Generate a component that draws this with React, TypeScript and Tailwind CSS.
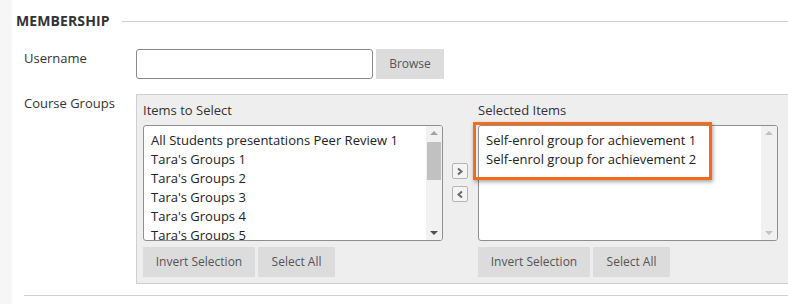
import React from "react";

const available = [
  "All Students presentations Peer Review 1",
  "Tara's Groups 1",
  "Tara's Groups 2",
  "Tara's Groups 3",
  "Tara's Groups 4",
  "Tara's Groups 5",
];

const selected = ["Self-enrol group for achievement 1", "Self-enrol group for achievement 2"];

function Scrollbar({ thumb }: { thumb?: boolean }) {
  return (
    <div className="flex w-[16px] flex-col items-center bg-[#f1f1f1] py-[5px]">
      <span className={`h-0 w-0 border-x-[4px] border-b-[4px] border-x-transparent ${thumb ? "border-b-[#a3a3a3]" : "border-b-[#c2c2c2]"}`} />
      {thumb ? <div className="mt-[7px] h-[38px] w-[14px] bg-[#c1c1c1]" /> : null}
      <div className="flex-1" />
      <span className={`h-0 w-0 border-x-[4px] border-t-[4px] border-x-transparent ${thumb ? "border-t-[#505050]" : "border-t-[#c2c2c2]"}`} />
    </div>
  );
}

function ListBox({ items, thumb }: { items: string[]; thumb?: boolean }) {
  return (
    <div className="flex h-[116px] w-[300px] overflow-hidden rounded-[3px] border border-[#8f8f8f] bg-white">
      <ul className="flex-1 overflow-hidden px-[7px] pt-[5px] text-[13px] leading-[19px] text-[#222]">
        {items.map((item) => (
          <li key={item} className="whitespace-nowrap">
            {item}
          </li>
        ))}
      </ul>
      <Scrollbar thumb={thumb} />
    </div>
  );
}

function GrayButton({ label, width }: { label: string; width: string }) {
  return (
    <button className={`h-[30px] ${width} bg-[#dcdcdc] text-[12px] text-[#555]`} type="button">
      {label}
    </button>
  );
}

function Column({ title, items, thumb }: { title: string; items: string[]; thumb?: boolean }) {
  return (
    <div className="flex flex-col">
      <p className="h-[30px] pt-[6px] text-[13px] leading-[18px] text-[#333]">{title}</p>
      <ListBox items={items} thumb={thumb} />
      <div className="mt-[6px] flex gap-[3px]">
        <GrayButton label="Invert Selection" width="w-[112px]" />
        <GrayButton label="Select All" width="w-[77px]" />
      </div>
    </div>
  );
}

function ArrowButton({ dir }: { dir: "right" | "left" }) {
  return (
    <button
      className="flex h-[16px] w-[16px] items-center justify-center rounded-[2px] border border-[#b5b5b5] bg-[#f4f4f4]"
      type="button"
    >
      <svg width="8" height="9" viewBox="0 0 8 9" fill="none">
        <path
          d={dir === "right" ? "M2 1.5 L5.5 4.5 L2 7.5" : "M6 1.5 L2.5 4.5 L6 7.5"}
          stroke="#6b6b6b"
          strokeWidth="2"
        />
      </svg>
    </button>
  );
}

export default function App() {
  return (
    <div className="flex h-[304px] w-[788px] overflow-hidden bg-white font-['Open_Sans',sans-serif] text-[#333]">
      <div className="w-[12px] shrink-0 bg-[#f6f6f6]" />
      <div className="flex min-w-0 flex-1 flex-col">
        <div className="flex items-center pt-[11px]">
          <h2 className="pl-[4px] pr-[12px] text-[14px] font-bold leading-[20px] tracking-[0.1px] text-[#333]">
            MEMBERSHIP
          </h2>
          <div className="h-px flex-1 bg-[#cfcfcf]" />
        </div>

        <div className="mt-[18px] flex pl-[12px]">
          <label className="w-[112px] shrink-0 text-[13px] leading-[18px]">Username</label>
          <input className="h-[30px] w-[237px] rounded-[3px] border border-[#8a8a8a] bg-white" type="text" />
          <button className="ml-[3px] h-[30px] w-[68px] bg-[#dcdcdc] text-[12px] text-[#555]" type="button">
            Browse
          </button>
        </div>

        <div className="mt-[15px] flex pl-[12px]">
          <label className="w-[112px] shrink-0 text-[13px] leading-[18px]">Course Groups</label>
          <div className="relative flex h-[190px] w-[700px] shrink-0 border border-[#cfcfcf] bg-[#eeeeee] pl-[6px]">
            <Column title="Items to Select" items={available} thumb />
            <div className="flex w-[35px] flex-col items-center gap-[7px] pr-[2px] pt-[68px]">
              <ArrowButton dir="right" />
              <ArrowButton dir="left" />
            </div>
            <Column title="Selected Items" items={selected} />
            <div className="pointer-events-none absolute left-[336px] top-[27px] h-[58px] w-[239px] border-[3px] border-[#f26c1c] shadow-[1px_2px_4px_rgba(0,0,0,0.35)]" />
          </div>
        </div>

        <div className="ml-[12px] mt-[11px] h-px bg-[#cfcfcf]" />
      </div>
    </div>
  );
}
